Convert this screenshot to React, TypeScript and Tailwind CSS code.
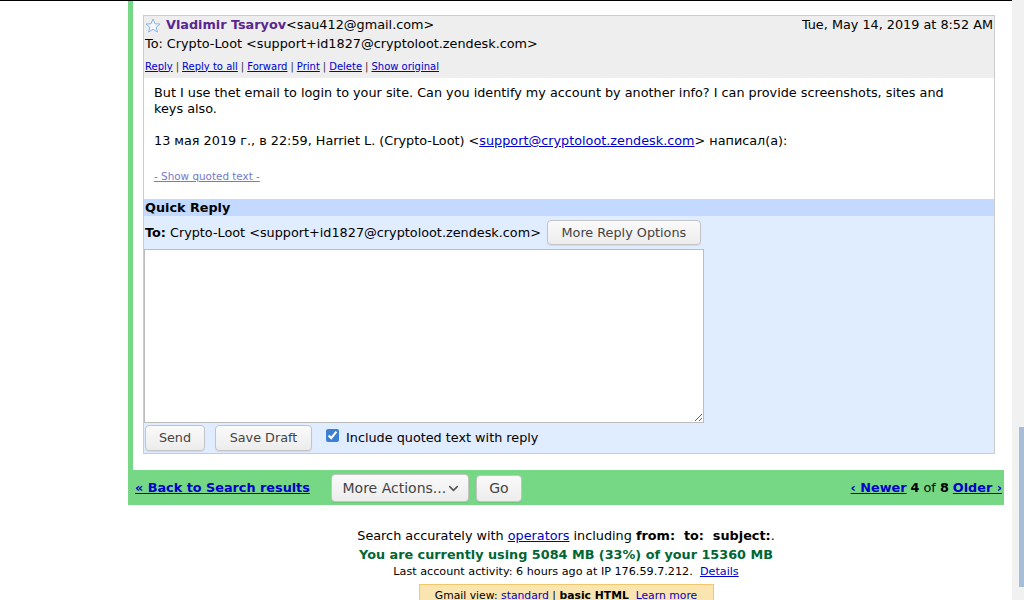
import { ChevronDown } from "lucide-react"

/* ---------------- SMALL PIECES ---------------- */

function Star() {
  return (
    <svg width="16" height="15" viewBox="0 0 16 15" className="shrink-0">
      <polygon
        points="8,1 10,5.8 15,6 11.2,9.2 12.4,14 8,11.3 3.6,14 4.8,9.2 1,6 6,5.8"
        fill="#f4f8ff"
        stroke="#8ab4e8"
        strokeWidth="1"
        strokeLinejoin="round"
      />
    </svg>
  )
}

function Btn({ children, className = "" }: { children: React.ReactNode; className?: string }) {
  return (
    <div
      className={`flex items-center justify-center rounded-[4px] border border-[#c4c4c4] bg-gradient-to-b from-[#fafafa] to-[#ececec] text-[#444] shadow-[0_1px_1px_rgba(0,0,0,0.08)] ${className}`}
    >
      {children}
    </div>
  )
}

const LINKS = ["Reply", "Reply to all", "Forward", "Print", "Delete", "Show original"]

/* ---------------- PAGE ---------------- */

export default function App() {
  return (
    <div className="flex h-[600px] w-[1024px] overflow-hidden bg-white text-[12.8px] text-black [font-family:'DejaVu_Sans',sans-serif]">
      {/* page */}
      <div className="flex w-[1012px] flex-col border-t border-black">
        <div className="ml-[128px] w-[876px]">
          {/* conversation */}
          <div className="border-l-[5px] border-[#76d884] pb-[16px] pl-[10px] pr-[9px] pt-[14px]">
            <div className="border border-[#cccccc]">
              {/* header */}
              <div className="bg-[#eeeeee] px-[1px] pb-[4px]">
                <div className="flex h-[18px] items-center justify-between">
                  <div className="flex items-center">
                    <Star />
                    <span className="ml-[5px] font-bold text-[#5a2690]">Vladimir Tsaryov</span>
                    <span>&lt;sau412@gmail.com&gt;</span>
                  </div>
                  <span>Tue, May 14, 2019 at 8:52 AM</span>
                </div>
                <div className="flex h-[20px] items-center">
                  To: Crypto-Loot &lt;support+id1827@cryptoloot.zendesk.com&gt;
                </div>
                <div className="mt-[4px] flex h-[16px] items-center text-[10px]">
                  {LINKS.map((l, i) => (
                    <span key={l} className="flex items-center">
                      {i > 0 && <span className="mx-[3px] text-[#333]">|</span>}
                      <span className="text-[#0000cc] underline">{l}</span>
                    </span>
                  ))}
                </div>
              </div>

              {/* body */}
              <div className="pb-[15px] pl-[10px] pr-[30px] pt-[7px] leading-[16px]">
                <p>
                  But I use thet email to login to your site. Can you identify my account by another info? I can
                  provide screenshots, sites and keys also.
                </p>
                <p className="mt-[16px]">
                  13 мая 2019 г., в 22:59, Harriet L. (Crypto-Loot) &lt;
                  <span className="text-[#0000cc] underline">support@cryptoloot.zendesk.com</span>&gt; написал(а):
                </p>
                <p className="mt-[19px] text-[10.4px] text-[#7777cc] underline">- Show quoted text -</p>
              </div>

              {/* quick reply */}
              <div className="flex h-[17px] items-center bg-[#c3d9ff] px-[1px] font-bold">Quick Reply</div>
              <div className="bg-[#e0ecff] pb-[2px] pt-[4px]">
                <div className="ml-[1px] flex items-center">
                  <span className="font-bold">To:</span>
                  <span className="ml-[4px]">Crypto-Loot &lt;support+id1827@cryptoloot.zendesk.com&gt;</span>
                  <Btn className="ml-[6px] h-[25px] w-[154px]">More Reply Options</Btn>
                </div>
                <textarea
                  className="mt-[4px] block h-[174px] w-[560px] border border-[#bdbdbd] bg-white outline-none"
                  defaultValue=""
                />
                <div className="ml-[1px] mt-[2px] flex items-center">
                  <Btn className="h-[26px] w-[60px]">Send</Btn>
                  <Btn className="ml-[10px] h-[26px] w-[97px]">Save Draft</Btn>
                  <input
                    type="checkbox"
                    defaultChecked
                    className="ml-[14px] h-[13px] w-[13px] -translate-y-[3px] accent-[#3b7fd4]"
                  />
                  <span className="ml-[7px]">Include quoted text with reply</span>
                </div>
              </div>
            </div>
          </div>

          {/* action bar */}
          <div className="flex h-[35px] items-center justify-between bg-[#76d884] pl-[7px] pr-[2px]">
            <div className="flex items-center pt-[1px]">
              <span className="font-bold text-[#0000cc] underline">« Back to Search results</span>
              <Btn className="ml-[21px] h-[28px] w-[138px] justify-between whitespace-nowrap pl-[8px] pr-[4px] text-[#333]">
                <span className="text-[14px]">More Actions...</span>
                <ChevronDown size={15} strokeWidth={2.5} className="text-[#555]" />
              </Btn>
              <Btn className="ml-[7px] h-[27px] w-[46px] text-[14px] text-[#333]">Go</Btn>
            </div>
            <div className="flex items-center gap-[4px] pt-[1px]">
              <span className="font-bold text-[#0000cc] underline">‹ Newer</span>
              <span>
                <b>4</b> of <b>8</b>
              </span>
              <span className="font-bold text-[#0000cc] underline">Older ›</span>
            </div>
          </div>

          {/* footer */}
          <div className="flex flex-col items-center pt-[21px]">
            <div className="flex h-[20px] items-center">
              Search accurately with&nbsp;<span className="text-[#0000cc] underline">operators</span>&nbsp;including&nbsp;
              <b>from:&nbsp; to:&nbsp; subject:</b>.
            </div>
            <div className="flex h-[18px] items-center font-bold text-[#006633]">
              You are currently using 5084 MB (33%) of your 15360 MB
            </div>
            <div className="flex h-[16px] items-center text-[11.2px]">
              Last account activity: 6 hours ago at IP 176.59.7.212.&nbsp;&nbsp;
              <span className="text-[#0000cc] underline">Details</span>
            </div>
            <div className="mt-[4px] flex h-[24px] w-[295px] items-start justify-center border border-[#f1c86d] bg-[#fae5b0] pt-[3px] text-[10.8px]">
              Gmail view:&nbsp;<span className="text-[#0000cc] underline">standard</span>&nbsp;|&nbsp;
              <b>basic HTML</b>&nbsp;&nbsp;<span className="text-[#0000cc] underline">Learn more</span>
            </div>
          </div>
        </div>
      </div>

      {/* scrollbar */}
      <div className="flex w-[12px] flex-col bg-[#f1f1f1]">
        <div className="h-[427px]" />
        <div className="ml-[7px] h-[160px] w-[5px] bg-[#a6bfd7]" />
      </div>
    </div>
  )
}
